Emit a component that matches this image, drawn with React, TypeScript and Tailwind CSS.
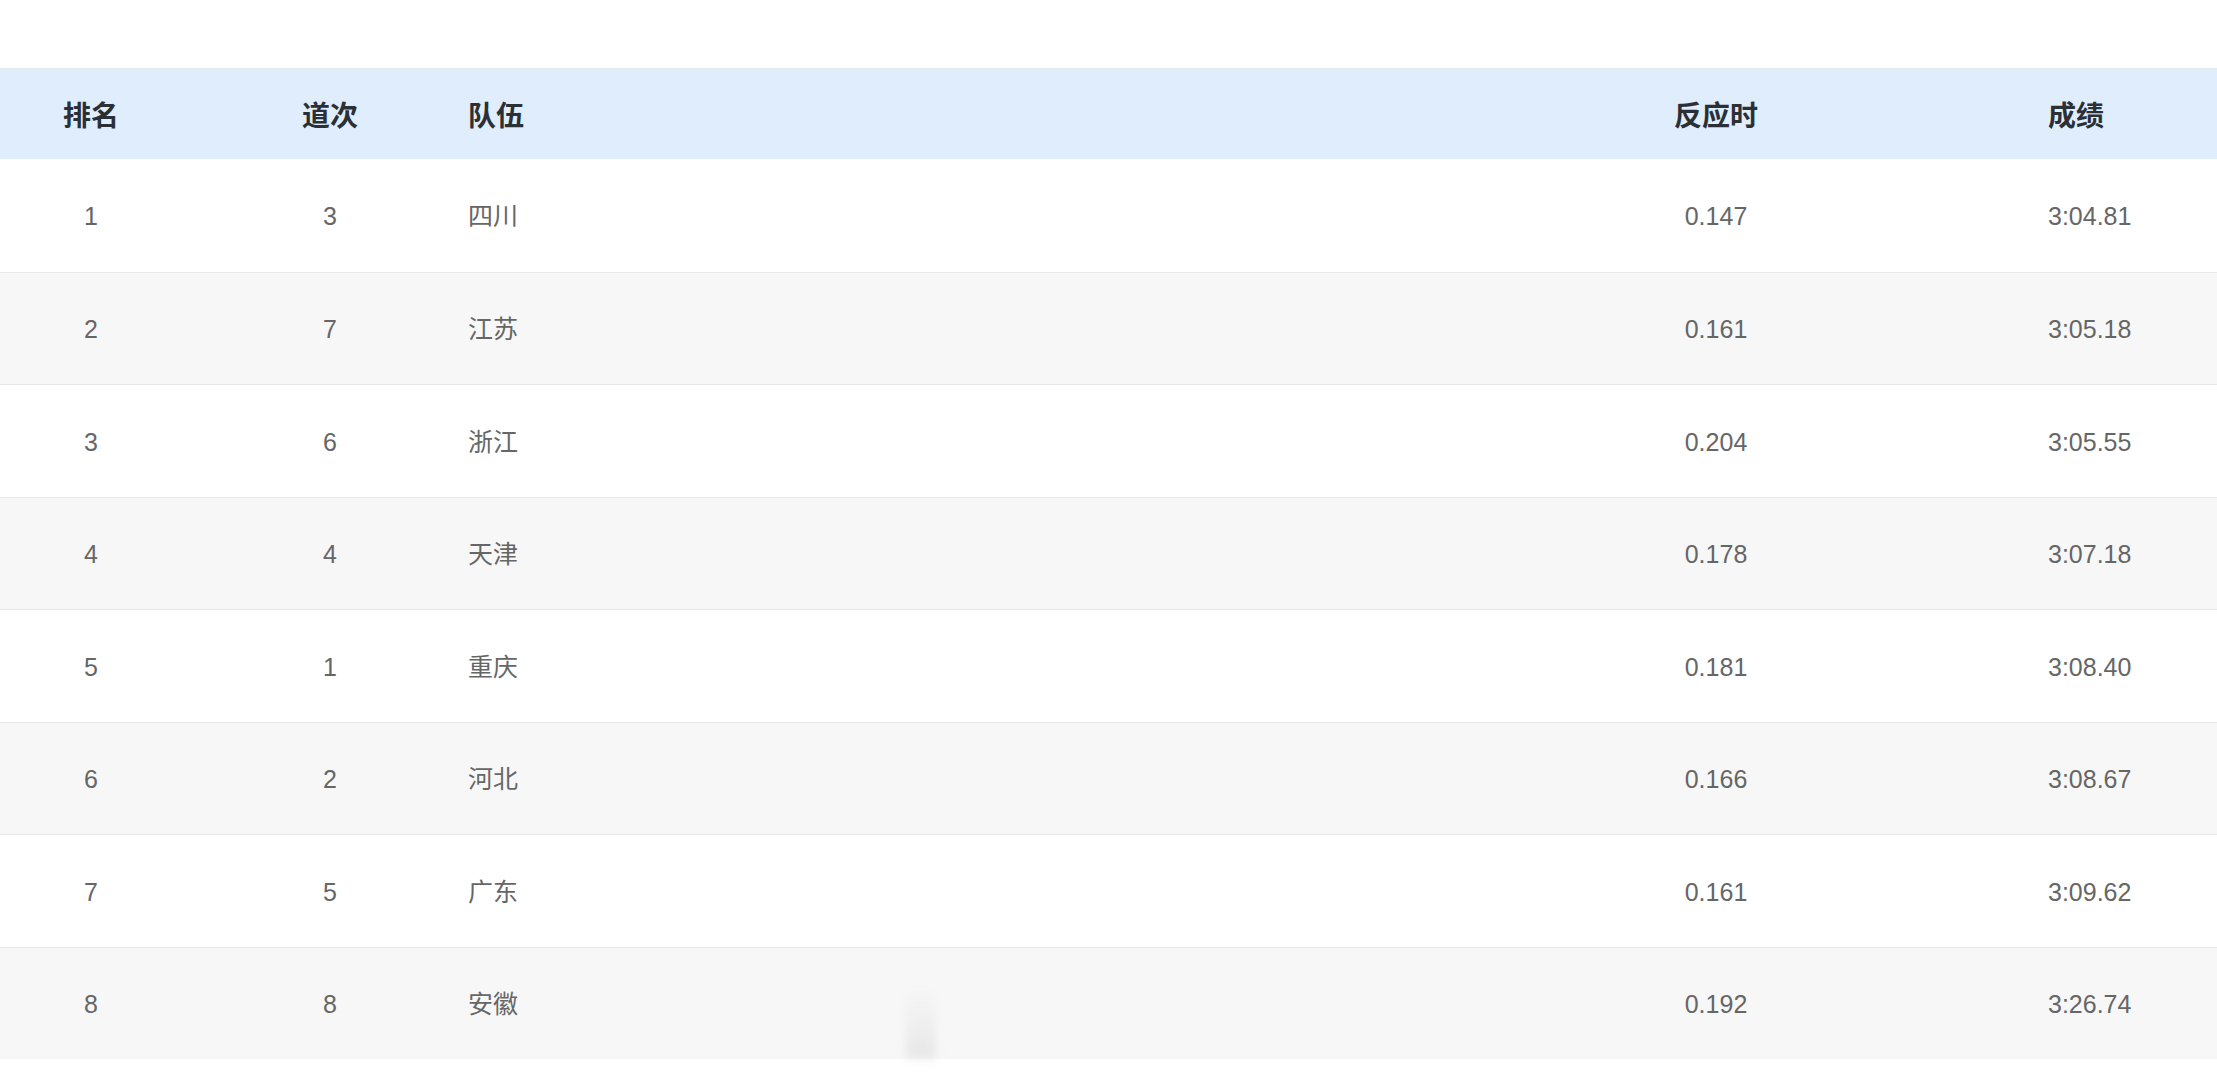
const rows = [
  { rank: 1, lane: 3, team: "四川", rt: "0.147", time: "3:04.81" },
  { rank: 2, lane: 7, team: "江苏", rt: "0.161", time: "3:05.18" },
  { rank: 3, lane: 6, team: "浙江", rt: "0.204", time: "3:05.55" },
  { rank: 4, lane: 4, team: "天津", rt: "0.178", time: "3:07.18" },
  { rank: 5, lane: 1, team: "重庆", rt: "0.181", time: "3:08.40" },
  { rank: 6, lane: 2, team: "河北", rt: "0.166", time: "3:08.67" },
  { rank: 7, lane: 5, team: "广东", rt: "0.161", time: "3:09.62" },
  { rank: 8, lane: 8, team: "安徽", rt: "0.192", time: "3:26.74" },
];

const font = "font-['Liberation_Sans','Noto_Sans_CJK_SC',sans-serif]";

export default function App() {
  return (
    <div className={`w-[2217px] h-[1080px] bg-white pt-[68px] ${font}`}>
      <div className="relative">
        {/* header */}
        <div className="flex items-center h-[91px] pt-[5px] bg-[#dfedfc] border-t border-[#e3ecf6] text-[28px] font-bold text-[#2b2f36]">
          <div className="w-[182px] text-center">排名</div>
          <div className="w-[286px] pl-[10px] text-center">道次</div>
          <div className="flex-1">队伍</div>
          <div className="w-[664px] text-center">反应时</div>
          <div className="w-[169px]">成绩</div>
        </div>

        {rows.map((r, i) => (
          <div
            key={r.rank}
            className={`flex items-center h-[112.5px] pt-[3px] text-[25px] text-[#666666] ${
              i % 2 === 1 ? "bg-[#f7f7f7]" : "bg-white"
            } ${i > 0 ? "border-t border-[#e8e8e8]" : ""}`}
          >
            <div className="w-[182px] text-center">{r.rank}</div>
            <div className="w-[286px] pl-[10px] text-center">{r.lane}</div>
            <div className="flex-1">{r.team}</div>
            <div className="w-[664px] text-center">{r.rt}</div>
            <div className="w-[169px]">{r.time}</div>
          </div>
        ))}

        {/* faint smudge near bottom */}
        <div className="absolute left-[906px] bottom-0 w-[30px] h-[72px] bg-gradient-to-b from-transparent to-[#dcdcdc] blur-[4px] opacity-60" />
      </div>
    </div>
  );
}
